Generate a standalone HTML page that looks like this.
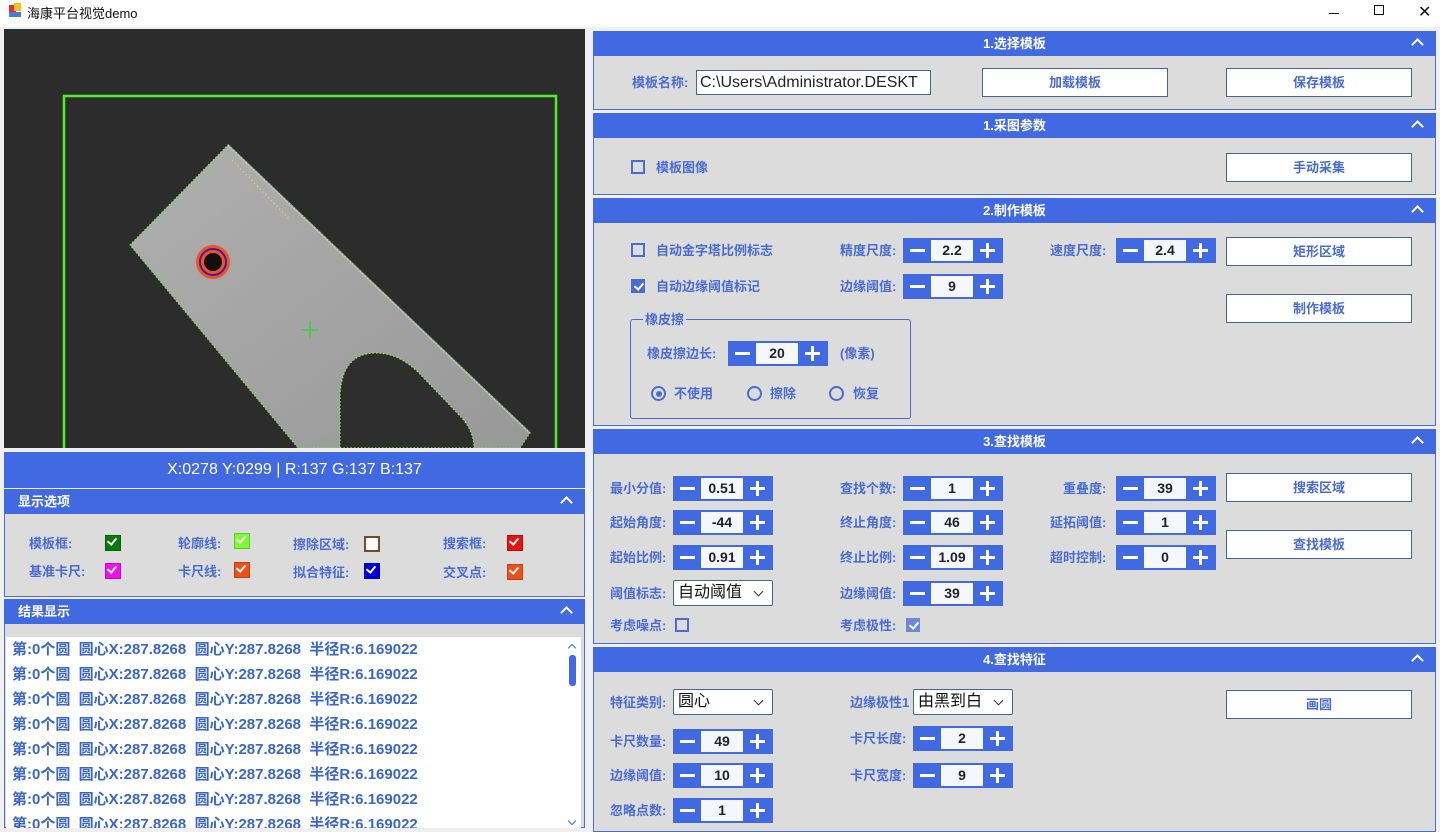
<!DOCTYPE html>
<html><head><meta charset="utf-8"><style>
*{box-sizing:border-box;margin:0;padding:0}
body{width:1440px;height:828px;overflow:hidden;background:#f0f0f0;font-family:"Liberation Sans","Noto Sans CJK SC",sans-serif;position:relative}
.a{position:absolute}
.hd{position:absolute;background:#4169e1;color:#fff;font-weight:bold;font-size:13px;height:25px;line-height:25px}
.bd{position:absolute;background:#dcdcdc;border:1px solid #4a6fd0;border-top:none}
.car{position:absolute;right:14px;top:9px;width:9px;height:9px;border-left:2px solid #fff;border-top:2px solid #fff;transform:rotate(45deg)}
.lb{position:absolute;color:#4a6cd0;font-size:13px;font-weight:bold;line-height:16px;transform:translateY(-7px);white-space:nowrap}
.sp{position:absolute;width:100px;height:25px;background:#4169e1;transform:translateY(-12px)}
.sp .v{position:absolute;left:28px;top:2px;width:42px;height:21px;background:#f4f8fd;text-align:center;font-weight:bold;font-size:14px;line-height:21px;color:#222}
.sp .m{position:absolute;left:7px;top:11px;width:15px;height:3px;background:#fff}
.sp .p1{position:absolute;left:77px;top:11px;width:15px;height:3px;background:#fff}
.sp .p2{position:absolute;left:83px;top:5px;width:3px;height:15px;background:#fff}
.btn{position:absolute;width:186px;height:29px;background:#fff;border:1px solid #4a6290;color:#4a6cd0;font-weight:bold;font-size:13px;text-align:center;line-height:28px}
.cb{position:absolute;width:14px;height:14px;border:2px solid #4a6cd0;transform:translateY(-7px)}
.cbc{background:#4a6cd0}
.cbc:after,.ck:after{content:"";position:absolute;left:3px;top:0px;width:4px;height:7px;border-right:2px solid #fff;border-bottom:2px solid #fff;transform:rotate(40deg)}
.ck{position:absolute;width:16px;height:16px;transform:translateY(-8px);border:1px solid rgba(0,0,0,.2)}
.rd{position:absolute;width:15px;height:15px;border:2px solid #4a6cd0;border-radius:50%;transform:translateY(-7px)}
.cmb{position:absolute;width:100px;height:26px;background:#fff;border:1px solid #4a6290;border-radius:2px;font-size:16px;line-height:24px;padding-left:4px;color:#111;transform:translateY(-13px)}
.cmb:after{content:"";position:absolute;right:10px;top:7px;width:6px;height:6px;border-right:1.5px solid #333;border-bottom:1.5px solid #333;transform:rotate(45deg)}
.res div{height:25px;line-height:25px;color:#3a66c8;font-weight:bold;font-size:15px;white-space:nowrap}
</style></head><body>
<div class="a" style="left:0;top:0;width:1440px;height:27px;background:#fff"></div>
<div class="a" style="left:9px;top:5px;width:7px;height:7px;background:#d33"></div>
<div class="a" style="left:14px;top:3px;width:7px;height:8px;background:#f0c020"></div>
<div class="a" style="left:9px;top:12px;width:12px;height:5px;background:#4a7ad8"></div>
<div class="a" style="left:27px;top:3px;font-size:13px;color:#111">海康平台视觉demo</div>
<div class="a" style="left:1329px;top:13px;width:10px;height:1px;background:#111"></div>
<div class="a" style="left:1374px;top:5px;width:10px;height:10px;border:1px solid #111"></div>
<div class="a" style="left:1418px;top:2px;font-size:16px;color:#111">✕</div>

<svg class="a" style="left:4px;top:29px" width="581" height="419" viewBox="4 29 581 419">
<defs><linearGradient id="g" x1="0" y1="0" x2="1" y2="1"><stop offset="0" stop-color="#b0b0b0"/><stop offset="1" stop-color="#989898"/></linearGradient></defs>
<rect x="4" y="29" width="581" height="419" fill="#2c2c2c"/>
<polygon points="228,145 530,433 520,448 298,448 130,245" fill="url(#g)" stroke="#7ee83a" stroke-width="1.2" stroke-dasharray="1.5 2"/>
<path d="M340,448 V395 Q342,353 376,353 Q398,353 418,372 L462,418 Q474,432 474,448 Z" fill="#2e2e2e" stroke="#8ef04a" stroke-width="1.2" stroke-dasharray="1.5 2"/>
<line x1="228" y1="145" x2="530" y2="433" stroke="#ddd" stroke-width="2" opacity=".5"/>
<line x1="232" y1="160" x2="290" y2="220" stroke="#f0e050" stroke-width="1.2" stroke-dasharray="1 3"/>
<circle cx="213" cy="262" r="17" fill="#ee5522"/>
<circle cx="213" cy="262" r="13" fill="none" stroke="#4a1aa0" stroke-width="2"/>
<circle cx="213" cy="262" r="9" fill="#101010"/>
<path d="M310,321 v18 M301,330 h18" stroke="#3ad03a" stroke-width="1.5"/>
<path d="M64,448 V96 H556 V448" fill="none" stroke="#4ff02a" stroke-width="2.5"/>
</svg>

<div class="a" style="left:4px;top:452px;width:581px;height:36px;background:#4169e1;color:#fff;font-size:16px;text-align:center;line-height:36px">X:0278 Y:0299 | R:137 G:137 B:137</div>

<div class="hd" style="left:4px;top:489px;width:581px;padding-left:14px">显示选项<div class="car"></div></div>
<div class="bd" style="left:4px;top:514px;width:581px;height:83px"></div>
<div class="lb" style="left:29px;top:543px">模板框:</div><div class="ck cbc" style="left:105px;top:543px;background:#0a7a0a"></div>
<div class="lb" style="left:178px;top:543px">轮廓线:</div><div class="ck cbc" style="left:234px;top:541px;background:#7cfc30"></div>
<div class="lb" style="left:293px;top:544px">擦除区域:</div><div class="ck" style="left:364px;top:544px;border:2px solid #7a4a20;background:#fff"></div>
<div class="lb" style="left:443px;top:543px">搜索框:</div><div class="ck cbc" style="left:507px;top:543px;background:#e81010"></div>
<div class="lb" style="left:29px;top:571px">基准卡尺:</div><div class="ck cbc" style="left:105px;top:571px;background:#f010f0"></div>
<div class="lb" style="left:178px;top:571px">卡尺线:</div><div class="ck cbc" style="left:234px;top:570px;background:#f05018"></div>
<div class="lb" style="left:293px;top:572px">拟合特征:</div><div class="ck cbc" style="left:364px;top:571px;background:#0000d8"></div>
<div class="lb" style="left:443px;top:572px">交叉点:</div><div class="ck cbc" style="left:507px;top:572px;background:#f05018"></div>

<div class="hd" style="left:4px;top:599px;width:581px;padding-left:14px">结果显示<div class="car"></div></div>
<div class="bd" style="left:4px;top:624px;width:581px;height:204px"></div>
<div class="a res" style="left:6px;top:637px;width:575px;height:191px;background:#fff;padding-left:6px;overflow:hidden">
<div>第:0个圆&nbsp; 圆心X:287.8268&nbsp; 圆心Y:287.8268&nbsp; 半径R:6.169022</div>
<div>第:0个圆&nbsp; 圆心X:287.8268&nbsp; 圆心Y:287.8268&nbsp; 半径R:6.169022</div>
<div>第:0个圆&nbsp; 圆心X:287.8268&nbsp; 圆心Y:287.8268&nbsp; 半径R:6.169022</div>
<div>第:0个圆&nbsp; 圆心X:287.8268&nbsp; 圆心Y:287.8268&nbsp; 半径R:6.169022</div>
<div>第:0个圆&nbsp; 圆心X:287.8268&nbsp; 圆心Y:287.8268&nbsp; 半径R:6.169022</div>
<div>第:0个圆&nbsp; 圆心X:287.8268&nbsp; 圆心Y:287.8268&nbsp; 半径R:6.169022</div>
<div>第:0个圆&nbsp; 圆心X:287.8268&nbsp; 圆心Y:287.8268&nbsp; 半径R:6.169022</div>
<div>第:0个圆&nbsp; 圆心X:287.8268&nbsp; 圆心Y:287.8268&nbsp; 半径R:6.169022</div>
</div>
<div class="a" style="left:565px;top:637px;width:16px;height:191px;background:#fff"></div>
<div class="a" style="left:569px;top:645px;width:6px;height:6px;border-left:1.5px solid #4a6cd0;border-top:1.5px solid #4a6cd0;transform:rotate(45deg)"></div>
<div class="a" style="left:569px;top:655px;width:7px;height:31px;background:#4169e1;border-radius:3px"></div>
<div class="a" style="left:569px;top:818px;width:6px;height:6px;border-right:1.5px solid #4a6cd0;border-bottom:1.5px solid #4a6cd0;transform:rotate(45deg)"></div>

<div class="hd" style="left:593px;top:31px;width:843px;text-align:center">1.选择模板<div class="car"></div></div>
<div class="bd" style="left:593px;top:56px;width:843px;height:54px"></div>
<div class="lb" style="left:632px;top:82px">模板名称:</div>
<div class="a" style="left:696px;top:70px;width:235px;height:25px;background:#fff;border:1px solid #4a6290;font-size:16px;line-height:23px;padding-left:3px;color:#222;overflow:hidden;white-space:nowrap">C:\Users\Administrator.DESKT</div>
<div class="btn" style="left:982px;top:68px">加载模板</div>
<div class="btn" style="left:1226px;top:68px">保存模板</div>

<div class="hd" style="left:593px;top:113px;width:843px;text-align:center">1.采图参数<div class="car"></div></div>
<div class="bd" style="left:593px;top:138px;width:843px;height:57px"></div>
<div class="cb" style="left:631px;top:167px"></div><div class="lb" style="left:656px;top:167px">模板图像</div>
<div class="btn" style="left:1226px;top:153px">手动采集</div>

<div class="hd" style="left:593px;top:198px;width:843px;text-align:center">2.制作模板<div class="car"></div></div>
<div class="bd" style="left:593px;top:223px;width:843px;height:203px"></div>
<div class="cb" style="left:631px;top:250px"></div><div class="lb" style="left:656px;top:250px">自动金字塔比例标志</div>
<div class="cb cbc" style="left:631px;top:286px"></div><div class="lb" style="left:656px;top:286px">自动边缘阈值标记</div>
<div class="lb" style="left:840px;top:250px">精度尺度:</div>
<div class="sp" style="left:903px;top:250px"><div class="m"></div><div class="v">2.2</div><div class="p1"></div><div class="p2"></div></div>
<div class="lb" style="left:1050px;top:250px">速度尺度:</div>
<div class="sp" style="left:1116px;top:250px"><div class="m"></div><div class="v">2.4</div><div class="p1"></div><div class="p2"></div></div>
<div class="lb" style="left:840px;top:286px">边缘阈值:</div>
<div class="sp" style="left:903px;top:286px"><div class="m"></div><div class="v">9</div><div class="p1"></div><div class="p2"></div></div>
<div class="btn" style="left:1226px;top:237px">矩形区域</div>
<div class="btn" style="left:1226px;top:294px">制作模板</div>
<div class="a" style="left:630px;top:319px;width:281px;height:100px;border:1px solid #4a6cd0;border-radius:3px"></div>
<div class="lb" style="left:643px;top:319px;background:#dcdcdc;padding:0 2px">橡皮擦</div>
<div class="lb" style="left:647px;top:353px">橡皮擦边长:</div>
<div class="sp" style="left:728px;top:353px"><div class="m"></div><div class="v">20</div><div class="p1"></div><div class="p2"></div></div>
<div class="lb" style="left:840px;top:353px">(像素)</div>
<div class="rd" style="left:651px;top:393px"><div class="a" style="left:2.5px;top:2.5px;width:6px;height:6px;border-radius:50%;background:#4a6cd0"></div></div><div class="lb" style="left:674px;top:393px">不使用</div>
<div class="rd" style="left:747px;top:393px"></div><div class="lb" style="left:770px;top:393px">擦除</div>
<div class="rd" style="left:829px;top:393px"></div><div class="lb" style="left:853px;top:393px">恢复</div>

<div class="hd" style="left:593px;top:429px;width:843px;text-align:center">3.查找模板<div class="car"></div></div>
<div class="bd" style="left:593px;top:454px;width:843px;height:190px"></div>
<div class="lb" style="left:610px;top:488px">最小分值:</div>
<div class="sp" style="left:673px;top:488px"><div class="m"></div><div class="v">0.51</div><div class="p1"></div><div class="p2"></div></div>
<div class="lb" style="left:840px;top:488px">查找个数:</div>
<div class="sp" style="left:903px;top:488px"><div class="m"></div><div class="v">1</div><div class="p1"></div><div class="p2"></div></div>
<div class="lb" style="left:1063px;top:488px">重叠度:</div>
<div class="sp" style="left:1116px;top:488px"><div class="m"></div><div class="v">39</div><div class="p1"></div><div class="p2"></div></div>
<div class="lb" style="left:610px;top:522px">起始角度:</div>
<div class="sp" style="left:673px;top:522px"><div class="m"></div><div class="v">-44</div><div class="p1"></div><div class="p2"></div></div>
<div class="lb" style="left:840px;top:522px">终止角度:</div>
<div class="sp" style="left:903px;top:522px"><div class="m"></div><div class="v">46</div><div class="p1"></div><div class="p2"></div></div>
<div class="lb" style="left:1050px;top:522px">延拓阈值:</div>
<div class="sp" style="left:1116px;top:522px"><div class="m"></div><div class="v">1</div><div class="p1"></div><div class="p2"></div></div>
<div class="lb" style="left:610px;top:557px">起始比例:</div>
<div class="sp" style="left:673px;top:557px"><div class="m"></div><div class="v">0.91</div><div class="p1"></div><div class="p2"></div></div>
<div class="lb" style="left:840px;top:557px">终止比例:</div>
<div class="sp" style="left:903px;top:557px"><div class="m"></div><div class="v">1.09</div><div class="p1"></div><div class="p2"></div></div>
<div class="lb" style="left:1050px;top:557px">超时控制:</div>
<div class="sp" style="left:1116px;top:557px"><div class="m"></div><div class="v">0</div><div class="p1"></div><div class="p2"></div></div>
<div class="lb" style="left:610px;top:593px">阈值标志:</div>
<div class="cmb" style="left:673px;top:593px">自动阈值</div>
<div class="lb" style="left:840px;top:593px">边缘阈值:</div>
<div class="sp" style="left:903px;top:593px"><div class="m"></div><div class="v">39</div><div class="p1"></div><div class="p2"></div></div>
<div class="lb" style="left:610px;top:625px">考虑噪点:</div><div class="cb" style="left:675px;top:625px"></div>
<div class="lb" style="left:840px;top:625px">考虑极性:</div><div class="cb cbc" style="left:906px;top:625px;background:#6c88d8;border-color:#6c88d8"></div>
<div class="btn" style="left:1226px;top:473px">搜索区域</div>
<div class="btn" style="left:1226px;top:530px">查找模板</div>

<div class="hd" style="left:593px;top:647px;width:843px;text-align:center">4.查找特征<div class="car"></div></div>
<div class="bd" style="left:593px;top:672px;width:843px;height:160px"></div>
<div class="lb" style="left:610px;top:702px">特征类别:</div>
<div class="cmb" style="left:673px;top:702px">圆心</div>
<div class="lb" style="left:850px;top:702px">边缘极性1</div>
<div class="cmb" style="left:913px;top:702px">由黑到白</div>
<div class="lb" style="left:610px;top:741px">卡尺数量:</div>
<div class="sp" style="left:673px;top:741px"><div class="m"></div><div class="v">49</div><div class="p1"></div><div class="p2"></div></div>
<div class="lb" style="left:850px;top:738px">卡尺长度:</div>
<div class="sp" style="left:913px;top:738px"><div class="m"></div><div class="v">2</div><div class="p1"></div><div class="p2"></div></div>
<div class="lb" style="left:610px;top:775px">边缘阈值:</div>
<div class="sp" style="left:673px;top:775px"><div class="m"></div><div class="v">10</div><div class="p1"></div><div class="p2"></div></div>
<div class="lb" style="left:850px;top:775px">卡尺宽度:</div>
<div class="sp" style="left:913px;top:775px"><div class="m"></div><div class="v">9</div><div class="p1"></div><div class="p2"></div></div>
<div class="lb" style="left:610px;top:810px">忽略点数:</div>
<div class="sp" style="left:673px;top:810px"><div class="m"></div><div class="v">1</div><div class="p1"></div><div class="p2"></div></div>
<div class="btn" style="left:1226px;top:690px">画圆</div>
</body></html>
